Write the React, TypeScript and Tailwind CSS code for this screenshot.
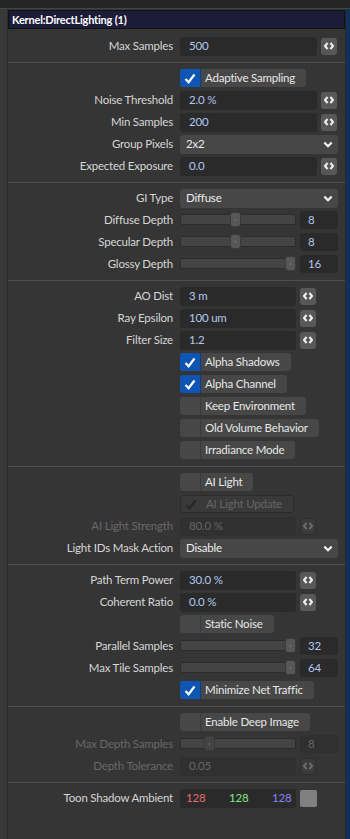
import React from 'react';

type RowProps = { label: string; dim?: boolean; children?: React.ReactNode };

const Row = ({ label, dim, children }: RowProps) => (
  <div className="flex h-[22px] items-center">
    <div
      className={`w-[165px] shrink-0 whitespace-nowrap text-right ${dim ? 'text-[#686868]' : 'text-[#d6d6d6]'}`}
    >
      {label}
    </div>
    <div className="ml-[7px] flex items-center">{children}</div>
  </div>
);

const Sep = () => <div className="mt-[5px] mb-[4px] h-px bg-[#4e4e4e]" />;

const Spin = ({ dim }: { dim?: boolean }) => (
  <div
    className={`ml-[4px] flex h-[17px] w-[16px] items-center justify-center rounded-[3px] ${
      dim ? 'border border-[#2c2c2c] bg-[#3b3b3b]' : 'bg-[#585858]'
    }`}
  >
    <svg width="10" height="8" viewBox="0 0 10 8">
      <path
        d="M3.6 1 L1 4 L3.6 7 M6.4 1 L9 4 L6.4 7"
        fill="none"
        stroke={dim ? '#6a6a6a' : '#f0f0f0'}
        strokeWidth="2"
        strokeLinejoin="round"
      />
    </svg>
  </div>
);

const Field = ({ value, wide, dim }: { value: string; wide?: boolean; dim?: boolean }) => (
  <div
    className={`flex h-[19px] items-center rounded-[3px] pl-[9px] ${wide ? 'w-[137px]' : 'w-[116px]'} ${
      dim ? 'bg-[#303030] text-[#666]' : 'bg-[#2a2a2a] text-[#b3c7ef]'
    }`}
  >
    {value}
  </div>
);

const Select = ({ value }: { value: string }) => (
  <div className="flex h-[19px] w-[158px] items-center justify-between rounded-[3px] bg-[#474747] pl-[6px] pr-[5px] text-[#ececec]">
    <span>{value}</span>
    <svg width="10" height="7" viewBox="0 0 10 7">
      <path d="M1.3 1.5 L5 5.2 L8.7 1.5" fill="none" stroke="#f2f2f2" strokeWidth="2.2" />
    </svg>
  </div>
);

const Check = ({ label, on, dim }: { label: string; on?: boolean; dim?: boolean }) => (
  <div
    className={`flex h-[18px] items-stretch overflow-hidden rounded-[3px] ${
      dim ? 'border border-[#2a2a2a] bg-[#393939] text-[#666]' : 'bg-[#474747] text-[#e8e8e8]'
    }`}
  >
    <div
      className={`flex w-[21px] items-center justify-center border-r ${
        on ? 'border-[#0c3f88] bg-[#0f55b4]' : 'border-[#3a3a3a]'
      } ${dim ? 'border-[#2e2e2e]' : ''}`}
    >
      {(on || dim) && (
        <svg width="12" height="11" viewBox="0 0 12 11">
          <path
            d="M1.5 6 L4.6 9.2 L10.5 1.5"
            fill="none"
            stroke={dim ? '#262626' : '#ffffff'}
            strokeWidth="2.2"
          />
        </svg>
      )}
    </div>
    <div className="flex items-center pl-[4px] pr-[11px]">{label}</div>
  </div>
);

const Slider = ({ pos, value, dim }: { pos: number; value: string; dim?: boolean }) => (
  <div className="flex items-center">
    <div className="relative h-[18px] w-[116px]">
      <div className="absolute left-0 right-0 top-[3px] h-[11px] rounded-[2px] border border-[#2c2c2c] bg-[#444]" />
      <div
        className={`absolute top-[1px] flex h-[15px] w-[11px] items-center justify-center rounded-[3px] border border-[#3a3a3a] ${
          dim ? 'bg-[#444]' : 'bg-[#575757]'
        }`}
        style={{ left: pos }}
      >
        <div className="h-[2px] w-[1px] bg-[#777]" />
      </div>
    </div>
    <div
      className={`ml-[4px] flex h-[18px] w-[38px] items-center rounded-[3px] pl-[8px] ${
        dim ? 'bg-[#303030] text-[#666]' : 'bg-[#2a2a2a] text-[#b3c7ef]'
      }`}
    >
      {value}
    </div>
  </div>
);

export default function App() {
  return (
    <div className="flex h-[839px] w-[350px] flex-col bg-[#353535] font-['Lato','Roboto',sans-serif] text-[11.5px] leading-[14px] tracking-[-0.2px]">
      <div className="h-[9px] shrink-0 border-b border-[#444] bg-[#242424]" />
      <div className="flex flex-1">
        <div className="w-[7px] shrink-0 bg-[#393939]" />
        <div className="flex flex-1 flex-col border-l border-r border-l-[#2a2a2a] border-r-[#262626]">
          <div className="mt-[1px] flex h-[19px] items-center border border-[#111] bg-[#1d1c38] pl-[3px] text-[11px] font-bold text-white">
            Kernel:DirectLighting (1)
          </div>
          <div className="mt-[6px]">
            <Row label="Max Samples">
              <Field value="500" wide />
              <Spin />
            </Row>
            <Sep />
            <Row label="">
              <Check label="Adaptive Sampling" on />
            </Row>
            <Row label="Noise Threshold">
              <Field value="2.0 %" wide />
              <Spin />
            </Row>
            <Row label="Min Samples">
              <Field value="200" wide />
              <Spin />
            </Row>
            <Row label="Group Pixels">
              <Select value="2x2" />
            </Row>
            <Row label="Expected Exposure">
              <Field value="0.0" wide />
              <Spin />
            </Row>
            <Sep />
            <Row label="GI Type">
              <Select value="Diffuse" />
            </Row>
            <Row label="Diffuse Depth">
              <Slider pos={50} value="8" />
            </Row>
            <Row label="Specular Depth">
              <Slider pos={50} value="8" />
            </Row>
            <Row label="Glossy Depth">
              <Slider pos={105} value="16" />
            </Row>
            <Sep />
            <Row label="AO Dist">
              <Field value="3 m" />
              <Spin />
            </Row>
            <Row label="Ray Epsilon">
              <Field value="100 um" />
              <Spin />
            </Row>
            <Row label="Filter Size">
              <Field value="1.2" />
              <Spin />
            </Row>
            <Row label="">
              <Check label="Alpha Shadows" on />
            </Row>
            <Row label="">
              <Check label="Alpha Channel" on />
            </Row>
            <Row label="">
              <Check label="Keep Environment" />
            </Row>
            <Row label="">
              <Check label="Old Volume Behavior" />
            </Row>
            <Row label="">
              <Check label="Irradiance Mode" />
            </Row>
            <Sep />
            <Row label="">
              <Check label="AI Light" />
            </Row>
            <Row label="">
              <Check label="AI Light Update" dim />
            </Row>
            <Row label="AI Light Strength" dim>
              <Field value="80.0 %" dim />
              <Spin dim />
            </Row>
            <Row label="Light IDs Mask Action">
              <Select value="Disable" />
            </Row>
            <Sep />
            <Row label="Path Term Power">
              <Field value="30.0 %" />
              <Spin />
            </Row>
            <Row label="Coherent Ratio">
              <Field value="0.0 %" />
              <Spin />
            </Row>
            <Row label="">
              <Check label="Static Noise" />
            </Row>
            <Row label="Parallel Samples">
              <Slider pos={105} value="32" />
            </Row>
            <Row label="Max Tile Samples">
              <Slider pos={105} value="64" />
            </Row>
            <Row label="">
              <Check label="Minimize Net Traffic" on />
            </Row>
            <Sep />
            <Row label="">
              <Check label="Enable Deep Image" />
            </Row>
            <Row label="Max Depth Samples" dim>
              <Slider pos={24} value="8" dim />
            </Row>
            <Row label="Depth Tolerance" dim>
              <Field value="0.05" dim />
              <Spin dim />
            </Row>
            <Sep />
            <Row label="Toon Shadow Ambient">
              <div className="flex h-[19px] w-[116px] items-center rounded-[3px] bg-[#2a2a2a] pl-[6px]">
                <span className="w-[43px] text-[#e66a6a]">128</span>
                <span className="w-[43px] text-[#7fe87f]">128</span>
                <span className="text-[#8585f5]">128</span>
              </div>
              <div className="ml-[4px] h-[17px] w-[17px] rounded-[2px] bg-[#808080]" />
            </Row>
          </div>
        </div>
        <div className="w-[4px] shrink-0 bg-[#11305a]" />
      </div>
    </div>
  );
}
